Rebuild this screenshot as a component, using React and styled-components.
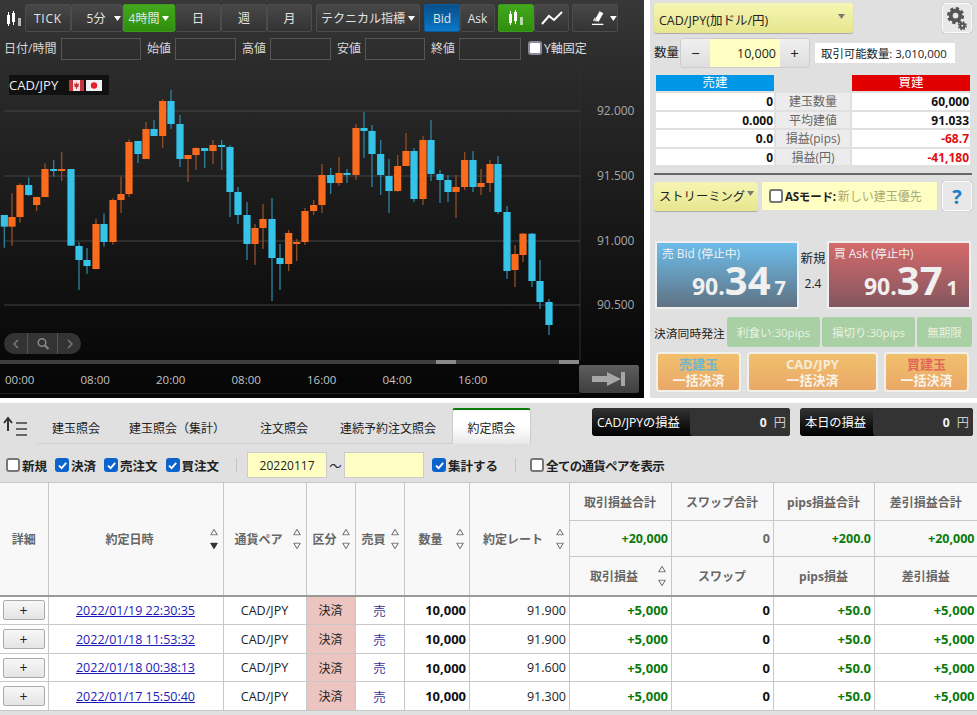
import React from "react"
import styled, { createGlobalStyle } from "styled-components"

const FONT = `"Open Sans", "Noto Sans CJK JP", sans-serif`

const GlobalStyle = createGlobalStyle`
html, body { margin: 0; padding: 0; background: #fff; }
body { font-family: ${FONT}; font-size: 12.5px; color: #222; width: 977px; height: 715px; overflow: hidden; }
* { box-sizing: border-box; }
`

// candles: x, wickTop, wickBottom, bodyTop, bodyBottom, up
const LEFT_CANDLES = [
    [13, 435, 533, 435, 470, 0], [36, 370, 527, 441, 470, 1], [60, 340, 458, 345, 441, 1], [86, 322, 378, 345, 375, 0],
    [110, 381, 423, 381, 405, 1], [135, 280, 381, 297, 381, 1], [161, 270, 320, 297, 303, 0], [185, 246, 333, 297, 303, 1],
    [213, 297, 527, 297, 527, 0], [237, 517, 660, 528, 570, 0], [261, 534, 612, 570, 588, 0], [288, 447, 598, 462, 597, 1],
    [312, 430, 530, 462, 516, 0], [339, 385, 524, 390, 516, 1], [363, 320, 429, 372, 390, 1], [387, 208, 380, 216, 372, 1],
    [414, 213, 279, 213, 252, 0], [438, 156, 267, 177, 267, 1], [462, 150, 198, 177, 198, 0], [488, 87, 234, 93, 198, 1],
    [513, 60, 177, 93, 162, 0], [540, 135, 291, 162, 267, 0], [564, 255, 336, 255, 267, 1], [588, 232, 300, 234, 255, 1],
    [614, 234, 294, 234, 243, 0], [639, 210, 282, 225, 243, 1], [665, 210, 300, 225, 231, 0], [690, 225, 441, 231, 366, 0],
    [714, 351, 462, 366, 435, 0], [741, 396, 570, 435, 522, 0], [765, 462, 585, 474, 522, 1], [789, 402, 537, 447, 474, 1],
    [816, 384, 693, 447, 564, 0], [840, 522, 660, 564, 582, 0], [866, 480, 603, 489, 582, 1], [890, 507, 573, 516, 522, 1],
]
const RIGHT_CANDLES = [
    [45, 414, 525, 423, 516, 1], [71, 390, 435, 405, 423, 1], [96, 282, 429, 315, 405, 1], [122, 294, 372, 315, 339, 0],
    [147, 261, 348, 309, 339, 1], [171, 297, 339, 309, 315, 0], [198, 162, 330, 174, 315, 1], [222, 126, 264, 174, 183, 0],
    [246, 165, 351, 183, 252, 0], [272, 210, 375, 252, 315, 0], [297, 267, 429, 318, 363, 0], [323, 255, 365, 288, 363, 1],
    [348, 189, 288, 243, 288, 1], [372, 234, 396, 243, 387, 0], [399, 198, 405, 210, 387, 1], [423, 150, 333, 210, 312, 0],
    [450, 300, 399, 312, 330, 0], [474, 315, 396, 330, 366, 0], [498, 315, 444, 351, 366, 1], [524, 246, 360, 270, 351, 1],
    [549, 243, 366, 270, 351, 0], [573, 297, 375, 339, 351, 1], [600, 270, 366, 282, 339, 1], [624, 258, 432, 282, 426, 0],
    [651, 408, 627, 426, 603, 0], [675, 525, 651, 552, 600, 1], [699, 489, 576, 491, 555, 1], [726, 489, 651, 491, 633, 0],
    [750, 570, 717, 633, 696, 0], [777, 687, 795, 696, 765, 0],
]
const candles = [
    ...LEFT_CANDLES.map((c) => [c[0] / 3, ...c.slice(1, 5).map((v) => v / 3 + 70), c[5]]),
    ...RIGHT_CANDLES.map((c) => [c[0] / 3 + 290, ...c.slice(1, 5).map((v) => v / 3 + 70), c[5]]),
]

const PRICE_LINES = [[111, "92.000"], [176, "91.500"], [241, "91.000"], [305, "90.500"]]
const TIMES = ["00:00", "08:00", "20:00", "08:00", "16:00", "04:00", "16:00"]
const CHART_TOP = 64

const POSITIONS = [
    ["0", "建玉数量", "60,000", false],
    ["0.000", "平均建値", "91.033", false],
    ["0.0", "損益(pips)", "-68.7", true],
    ["0", "損益(円)", "-41,180", true],
]

const TRADES = [
    ["2022/01/19 22:30:35", "91.900"],
    ["2022/01/18 11:53:32", "91.900"],
    ["2022/01/18 00:38:13", "91.600"],
    ["2022/01/17 15:50:40", "91.300"],
]
const ROW_HEIGHTS = [29, 29, 28, 29]
const COLS = [48, 175, 83, 49, 49, 65, 100, 102, 102, 101, 103]

function CandleIcon({ color = "#fff" }) {
    return (
        <svg width="16" height="16" viewBox="0 0 16 16">
            <g fill={color}>
                <rect x="1" y="4" width="3" height="9" />
                <rect x="2" y="1" width="1" height="14" />
                <rect x="6" y="2" width="3" height="9" />
                <rect x="7" y="0" width="1" height="14" />
                <rect x="12" y="7" width="3" height="8" opacity="0.65" />
            </g>
        </svg>
    )
}

function LineIcon() {
    return (
        <svg width="22" height="16" viewBox="0 0 22 16">
            <path d="M1 14 L8 6 L13 10 L21 2" fill="none" stroke="#fff" strokeWidth="2" />
        </svg>
    )
}

function PenIcon() {
    return (
        <svg width="14" height="16" viewBox="0 0 14 16">
            <path d="M4 10 L9 1 L13 3 L8 12 Z" fill="#fff" />
            <path d="M2 11 L4 7 L7 12 Z" fill="#ccc" />
            <rect x="1" y="14" width="12" height="1.4" fill="#fff" />
        </svg>
    )
}

function Caret({ color = "#fff" }) {
    return (
        <svg width="7" height="5" viewBox="0 0 7 5">
            <path d="M0 0 H7 L3.5 5 Z" fill={color} />
        </svg>
    )
}

function GearIcon() {
    return (
        <svg width="29" height="29" viewBox="0 0 29 29">
            <circle cx="13" cy="11.5" r="5" fill="none" stroke="#555" strokeWidth="4" />
            <circle cx="13" cy="11.5" r="7.6" fill="none" stroke="#555" strokeWidth="2.6" strokeDasharray="3.4 2.57" />
            <circle cx="20" cy="22" r="2.2" fill="none" stroke="#555" strokeWidth="2.2" />
            <circle cx="20" cy="22" r="3.9" fill="none" stroke="#555" strokeWidth="1.6" strokeDasharray="1.8 1.27" />
        </svg>
    )
}

function CanadaFlag() {
    return (
        <svg width="15" height="11" viewBox="0 0 15 11">
            <rect width="15" height="11" fill="#f4e6e6" />
            <rect width="4" height="11" fill="#c8343c" />
            <rect x="11" width="4" height="11" fill="#c8343c" />
            <path d="M7.5 2 L8.4 4 L10 3.6 L9.4 6 L10 6.4 L8 7.6 V9 H7 V7.6 L5 6.4 L5.6 6 L5 3.6 L6.6 4 Z" fill="#c8343c" />
        </svg>
    )
}

function JapanFlag() {
    return (
        <svg width="16" height="11" viewBox="0 0 16 11">
            <rect width="16" height="11" fill="#f2f2f2" />
            <circle cx="8" cy="5.5" r="3.2" fill="#e0202c" />
        </svg>
    )
}

function Sort({ active }) {
    return (
        <SortBox>
            <svg width="8" height="7" viewBox="0 0 8 7">
                <path d="M4 .8 L7.3 6.4 H.7 Z" fill="none" stroke="#666" />
            </svg>
            <svg width="8" height="7" viewBox="0 0 8 7">
                <path d="M4 6.2 L7.3 .6 H.7 Z" fill={active ? "#333" : "none"} stroke={active ? "#333" : "#666"} />
            </svg>
        </SortBox>
    )
}

function Check({ on, label, tight }) {
    return (
        <CheckLabel $tight={tight}>
            <CheckBox $on={on}>
                {on && (
                    <svg width="11" height="11" viewBox="0 0 11 11">
                        <path d="M2 5.6 L4.6 8.2 L9.2 2.8" fill="none" stroke="#fff" strokeWidth="1.8" />
                    </svg>
                )}
            </CheckBox>
            {label}
        </CheckLabel>
    )
}

function Chart() {
    return (
        <Plot>
            <svg width="644" height="296" viewBox={`0 ${CHART_TOP} 644 296`}>
                <line x1="580" x2="580" y1={CHART_TOP} y2="360" stroke="#2f2f2f" />
                {PRICE_LINES.map(([y, label]) => (
                    <g key={label}>
                        <line x1="4" x2="580" y1={y} y2={y} stroke="#444" strokeWidth="1" />
                        <PriceText x="597" y={y + 4}>{label}</PriceText>
                    </g>
                ))}
                {candles.map(([x, wt, wb, bt, bb, up], i) => (
                    <g key={i}>
                        <rect x={x - 0.7} y={wt} width="1.4" height={wb - wt} fill={up ? "#8c4a24" : "#2c7d98"} />
                        <rect x={x - 3.6} y={bt} width="7.2" height={Math.max(bb - bt, 2)} fill={up ? "#fb6b1d" : "#35c3ea"} />
                    </g>
                ))}
            </svg>
            <Legend>
                CAD/JPY
                <Flags><CanadaFlag /><JapanFlag /></Flags>
            </Legend>
            <NavPill>
                <NavPart><svg width="8" height="12" viewBox="0 0 8 12"><path d="M6 2 L2 6 L6 10" fill="none" stroke="#777" strokeWidth="1.6" /></svg></NavPart>
                <NavPart $mid><svg width="14" height="14" viewBox="0 0 14 14"><circle cx="6" cy="5.5" r="3.8" fill="none" stroke="#888" strokeWidth="1.5" /><path d="M9 8.5 L12.5 12" stroke="#888" strokeWidth="2" /></svg></NavPart>
                <NavPart><svg width="8" height="12" viewBox="0 0 8 12"><path d="M2 2 L6 6 L2 10" fill="none" stroke="#777" strokeWidth="1.6" /></svg></NavPart>
            </NavPill>
        </Plot>
    )
}

export default function App() {
    return (
        <Page>
            <GlobalStyle />
            <TopArea>
                <ChartPanel>
                    <Toolbar>
                        <ToolIcon><CandleIcon /></ToolIcon>
                        <ToolGroup>
                            <TickButton $w={46}>TICK</TickButton>
                            <ToolButton $w={52} $inner={9} $pl={14}>5分<Caret /></ToolButton>
                            <ToolButton $w={52} $tone="green">4時間<Caret /></ToolButton>
                            <ToolButton $w={46}>日</ToolButton>
                            <ToolButton $w={46}>週</ToolButton>
                            <ToolButton $w={45}>月</ToolButton>
                        </ToolGroup>
                        <ToolGroup $gap={4}>
                            <ToolButton $w={104}>テクニカル指標 <Caret /></ToolButton>
                        </ToolGroup>
                        <ToolGroup $gap={4}>
                            <ToolButton $w={36} $tone="blue">Bid</ToolButton>
                            <ToolButton $w={35}>Ask</ToolButton>
                        </ToolGroup>
                        <ToolGroup $gap={3}>
                            <ToolButton $w={36} $tone="green"><CandleIcon /></ToolButton>
                            <ToolButton $w={35}><LineIcon /></ToolButton>
                        </ToolGroup>
                        <ToolGroup $gap={3}>
                            <ToolButton $w={46} $inner={6} $pl={18}><PenIcon /><Caret /></ToolButton>
                        </ToolGroup>
                    </Toolbar>
                    <FieldRow>
                        <FieldLabel $w={53}>日付/時間</FieldLabel><FieldBox $w={80} />
                        <FieldLabel>始値</FieldLabel><FieldBox $w={61} />
                        <FieldLabel>高値</FieldLabel><FieldBox $w={61} />
                        <FieldLabel>安値</FieldLabel><FieldBox $w={60} />
                        <FieldLabel>終値</FieldLabel><FieldBox $w={62} />
                        <YFix><DarkCheck />Y軸固定</YFix>
                    </FieldRow>
                    <Chart />
                    <Scrollbar>
                        <ScrollHandle /><ScrollHandle />
                    </Scrollbar>
                    <TimeRow>
                        <TimeAxis>
                            {TIMES.map((t, i) => <TimeLabel key={i}>{t}</TimeLabel>)}
                        </TimeAxis>
                        <JumpButton>
                            <svg width="36" height="16" viewBox="0 0 36 16">
                                <path d="M1 5 H16 V1 L30 8 L16 15 V11 H1 Z" fill="#a6a6a6" />
                                <rect x="30" y="1" width="4" height="14" fill="#a6a6a6" />
                            </svg>
                        </JumpButton>
                    </TimeRow>
                </ChartPanel>
                <OrderPanel>
                    <PairRow>
                        <PairSelect>CAD/JPY(加ドル/円)<Caret color="#777" /></PairSelect>
                        <SquareButton><GearIcon /></SquareButton>
                    </PairRow>
                    <QtyRow>
                        <QtyLabel>数量</QtyLabel>
                        <Stepper>
                            <StepButton>−</StepButton>
                            <QtyValue>10,000</QtyValue>
                            <StepButton>+</StepButton>
                        </Stepper>
                        <Available>取引可能数量: 3,010,000</Available>
                    </QtyRow>
                    <PositionGrid>
                        <SideHead $c="#0097e6">売建</SideHead>
                        <span />
                        <SideHead $c="#e00000">買建</SideHead>
                        {POSITIONS.map(([sell, label, buy, loss]) => (
                            <React.Fragment key={label}>
                                <PosValue>{sell}</PosValue>
                                <PosLabel>{label}</PosLabel>
                                <PosValue $loss={loss}>{buy}</PosValue>
                            </React.Fragment>
                        ))}
                    </PositionGrid>
                    <Divider />
                    <ModeRow>
                        <ModeSelect>ストリーミング<Caret color="#777" /></ModeSelect>
                        <AsBox>
                            <PlainBox />
                            <AsName>ASモード:</AsName>
                            <AsHint>新しい建玉優先</AsHint>
                        </AsBox>
                        <SquareButton>?</SquareButton>
                    </ModeRow>
                    <QuoteRow>
                        <QuoteBox $side="bid">
                            <QuoteTitle>売 Bid (停止中)</QuoteTitle>
                            <QuotePrice>90.<b>34</b><i>7</i></QuotePrice>
                        </QuoteBox>
                        <Spread>
                            <span>新規</span>
                            <small>2.4</small>
                        </Spread>
                        <QuoteBox $side="ask">
                            <QuoteTitle>買 Ask (停止中)</QuoteTitle>
                            <QuotePrice>90.<b>37</b><i>1</i></QuotePrice>
                        </QuoteBox>
                    </QuoteRow>
                    <SettleRow>
                        <SettleLabel>決済同時発注</SettleLabel>
                        <SettleChip $w={93}>利食い:30pips</SettleChip>
                        <SettleChip $w={93}>損切り:30pips</SettleChip>
                        <SettleChip $w={55}>無期限</SettleChip>
                    </SettleRow>
                    <BulkRow>
                        <BulkButton $w={85} $c="#6fb7cf">売建玉<span>一括決済</span></BulkButton>
                        <BulkButton $w={131} $c="#f6ecd8">CAD/JPY<span>一括決済</span></BulkButton>
                        <BulkButton $w={85} $c="#e2685a">買建玉<span>一括決済</span></BulkButton>
                    </BulkRow>
                </OrderPanel>
            </TopArea>
            <BottomArea>
                <TabRow>
                    <SortIcon>
                        <svg width="27" height="22" viewBox="0 0 27 22">
                            <path d="M7 15 V3 M3 7 L7 2 L11 7" fill="none" stroke="#333" strokeWidth="2" />
                            <rect x="15" y="6" width="11" height="2" fill="#666" />
                            <rect x="15" y="12" width="11" height="2" fill="#666" />
                            <rect x="15" y="18" width="11" height="2" fill="#666" />
                        </svg>
                    </SortIcon>
                    <Tabs>
                        <Tab $w={78}>建玉照会</Tab>
                        <Tab $w={124}>建玉照会（集計）</Tab>
                        <Tab $w={90}>注文照会</Tab>
                        <Tab $w={118}>連続予約注文照会</Tab>
                        <ActiveTab>約定照会</ActiveTab>
                    </Tabs>
                    <Totals>
                        <TotalBox $label={98} $w={198}>
                            <span>CAD/JPYの損益</span>
                            <TotalValue><b>0</b> 円</TotalValue>
                        </TotalBox>
                        <TotalBox $label={73} $w={173}>
                            <span>本日の損益</span>
                            <TotalValue><b>0</b> 円</TotalValue>
                        </TotalBox>
                    </Totals>
                </TabRow>
                <FilterRow>
                    <Check label="新規" />
                    <Check on label="決済" />
                    <Check on label="売注文" />
                    <Check on label="買注文" />
                    <FilterSep $r={2} />
                    <DateBox>20220117</DateBox>
                    <Tilde>〜</Tilde>
                    <DateBox />
                    <Check on label="集計する" />
                    <FilterSep $r={6} />
                    <Check tight label="全ての通貨ペアを表示" />
                </FilterRow>
                <Table>
                    <colgroup>
                        {COLS.map((w, i) => <col key={i} width={w} />)}
                    </colgroup>
                    <thead>
                        <HeadRow $h={38}>
                            <Th rowSpan={3}>詳細</Th>
                            <Th rowSpan={3}><HeadCell>約定日時<Sort active /></HeadCell></Th>
                            <Th rowSpan={3}><HeadCell>通貨ペア<Sort /></HeadCell></Th>
                            <Th rowSpan={3}><HeadCell>区分<Sort /></HeadCell></Th>
                            <Th rowSpan={3}><HeadCell>売買<Sort /></HeadCell></Th>
                            <Th rowSpan={3}><HeadCell>数量<Sort /></HeadCell></Th>
                            <Th rowSpan={3}><HeadCell>約定レート<Sort /></HeadCell></Th>
                            <Th>取引損益合計</Th>
                            <Th>スワップ合計</Th>
                            <Th>pips損益合計</Th>
                            <Th>差引損益合計</Th>
                        </HeadRow>
                        <HeadRow $h={36}>
                            <SumCell $c="#0a7a0a">+20,000</SumCell>
                            <SumCell $c="#666">0</SumCell>
                            <SumCell $c="#0a7a0a">+200.0</SumCell>
                            <SumCell $c="#0a7a0a">+20,000</SumCell>
                        </HeadRow>
                        <HeadRow $h={39}>
                            <Th><HeadCell>取引損益<Sort /></HeadCell></Th>
                            <Th>スワップ</Th>
                            <Th>pips損益</Th>
                            <Th>差引損益</Th>
                        </HeadRow>
                    </thead>
                    <tbody>
                        {TRADES.map(([time, rate], i) => (
                            <BodyRow key={time} $h={ROW_HEIGHTS[i]}>
                                <Td $a="center"><PlusButton>+</PlusButton></Td>
                                <Td $a="center"><TimeLink>{time}</TimeLink></Td>
                                <Td $a="center">CAD/JPY</Td>
                                <KindCell>決済</KindCell>
                                <Td $a="center" $c="#3a3396">売</Td>
                                <Td $bold>10,000</Td>
                                <Td>{rate}</Td>
                                <Td $bold $c="#0a7a0a">+5,000</Td>
                                <Td $bold>0</Td>
                                <Td $bold $c="#0a7a0a">+50.0</Td>
                                <Td $bold $c="#0a7a0a">+5,000</Td>
                            </BodyRow>
                        ))}
                    </tbody>
                </Table>
            </BottomArea>
        </Page>
    )
}

const Page = styled.div`
width: 977px;
height: 715px;
display: flex;
flex-direction: column;
gap: 5px;
`
const TopArea = styled.div`
display: flex;
gap: 6px;
height: 398px;
`
const ChartPanel = styled.section`
width: 644px;
height: 398px;
display: flex;
flex-direction: column;
background: linear-gradient(#383838 0, #2c2c2c 60px, #0a0a0a 340px, #050505 100%);
color: #ddd;
`
const Toolbar = styled.div`
display: flex;
align-items: flex-start;
height: 38px;
padding-top: 4px;
`
const ToolIcon = styled.div`
width: 25px;
height: 28px;
padding: 7px 0 0 6px;
`
const ToolGroup = styled.div`
display: flex;
margin-left: ${(p) => p.$gap || 0}px;
`
const toneBg = {
    green: "linear-gradient(#43a81c, #2f8e0d)",
    blue: "linear-gradient(#08508c, #0a78c8)",
}
const ToolButton = styled.div`
width: ${(p) => p.$w}px;
height: 28px;
display: flex;
align-items: center;
justify-content: center;
gap: ${(p) => p.$inner || 3}px;
padding-left: ${(p) => p.$pl || 0}px;
font-size: 12px;
color: #e4e4e4;
background: ${(p) => toneBg[p.$tone] || "linear-gradient(#484848, #333)"};
border: 1px solid ${(p) => (p.$tone === "green" ? "#3c9a1c" : p.$tone === "blue" ? "#0a5c9c" : "#4c4c4c")};
border-radius: 2px;
`
const TickButton = styled(ToolButton)`
letter-spacing: 0.8px;
`
const FieldRow = styled.div`
display: flex;
align-items: center;
height: 22px;
padding-left: 4px;
font-size: 12px;
color: #d8d8d8;
`
const FieldLabel = styled.span`
width: ${(p) => p.$w || 24}px;
margin-right: 4px;
padding-bottom: 2px;
white-space: nowrap;
`
const FieldBox = styled.div`
width: ${(p) => p.$w}px;
height: 22px;
border: 1px solid #555;
margin-right: 6px;
`
const YFix = styled.div`
display: flex;
align-items: center;
gap: 2px;
margin-left: 1px;
padding-bottom: 2px;
color: #e0e0e0;
`
const DarkCheck = styled.span`
width: 14px;
height: 14px;
background: #fff;
border: 2px solid #8a8a9a;
border-radius: 3px;
`
const Plot = styled.div`
position: relative;
height: 296px;
margin-top: 4px;
svg { display: block; }
`
const PriceText = styled.text`
font-size: 12px;
fill: #a8a8a8;
font-family: ${FONT};
`
const Legend = styled.div`
position: absolute;
left: 9px;
top: 11px;
width: 100px;
height: 20px;
display: flex;
align-items: center;
justify-content: space-between;
padding-right: 7px;
background: #111;
font-size: 13px;
color: #eee;
`
const Flags = styled.span`
display: flex;
gap: 2px;
`
const NavPill = styled.div`
position: absolute;
left: 4px;
top: 269px;
width: 77px;
height: 21px;
display: flex;
background: #333;
border-radius: 11px;
`
const NavPart = styled.div`
flex: ${(p) => (p.$mid ? "0 0 31px" : "1")};
display: flex;
align-items: center;
justify-content: center;
${(p) => p.$mid && "border-left: 1px solid #555; border-right: 1px solid #555;"}
`
const Scrollbar = styled.div`
width: 579px;
height: 4px;
background: #3e3e3e;
display: flex;
justify-content: space-between;
padding: 0 0 0 436px;
`
const ScrollHandle = styled.span`
width: 20px;
height: 4px;
background: #8a8a8a;
`
const TimeRow = styled.div`
flex: 1;
display: flex;
align-items: flex-start;
`
const TimeAxis = styled.div`
width: 579px;
height: 30px;
border-bottom: 1px solid #222;
display: flex;
gap: 45.5px;
align-items: center;
padding: 1px 0 0 5px;
`
const TimeLabel = styled.span`
font-size: 11.5px;
width: 30px;
color: #c4c4c4;
`
const JumpButton = styled.div`
width: 60px;
height: 28px;
margin-top: 1px;
display: flex;
align-items: center;
justify-content: center;
background: linear-gradient(#5e5e5e, #3e3e3e);
border-radius: 2px;
`
const OrderPanel = styled.section`
flex: 1;
background: #e0e0e0;
padding: 3px 5px 0 4px;
display: flex;
flex-direction: column;
`
const PairRow = styled.div`
display: flex;
justify-content: space-between;
align-items: center;
height: 30px;
`
const yellowButton = `
background: linear-gradient(#f6f6b4, #e6e68e);
border-radius: 3px;
box-shadow: 0 1px 1px #aaa;
display: flex;
align-items: center;
justify-content: space-between;
`
const PairSelect = styled.div`
${yellowButton}
width: 199px;
height: 30px;
padding: 3px 8px 0 5px;
font-size: 12.5px;
svg { margin-top: -7px; }
`
const SquareButton = styled.div`
width: 30px;
height: 30px;
display: flex;
align-items: center;
justify-content: center;
background: #e8e8e8;
border: 1px solid #fafafa;
border-radius: 3px;
box-shadow: 0 0 1px #888;
font-size: 20px;
font-weight: 700;
color: #1a7fc8;
`
const QtyRow = styled.div`
display: flex;
align-items: center;
height: 30px;
margin-top: 5px;
`
const QtyLabel = styled.span`
width: 26px;
margin-top: -4px;
font-size: 12.5px;
`
const Stepper = styled.div`
display: flex;
width: 130px;
height: 30px;
border: 1px solid #ccc;
border-radius: 3px;
overflow: hidden;
`
const StepButton = styled.div`
width: 29px;
display: flex;
align-items: center;
justify-content: center;
font-size: 15px;
background: linear-gradient(#f0f0f0, #dedede);
`
const QtyValue = styled.div`
flex: 1;
display: flex;
align-items: center;
justify-content: flex-end;
padding-right: 4px;
background: #ffffc4;
font-size: 12.5px;
`
const Available = styled.div`
width: 140px;
height: 20px;
margin-left: 5px;
padding-left: 6px;
display: flex;
align-items: center;
white-space: nowrap;
background: #fff;
font-size: 11.4px;
`
const PositionGrid = styled.div`
display: grid;
grid-template-columns: 118px 74px 118px;
grid-template-rows: 16px 17px 16px 17px 16px;
gap: 2px;
margin: 7px 0 0 2px;
`
const SideHead = styled.div`
background: ${(p) => p.$c};
color: #fff;
text-align: center;
font-size: 12.5px;
line-height: 16px;
`
const PosValue = styled.div`
background: #fff;
text-align: right;
padding-right: 1px;
font-size: 12px;
font-weight: 700;
line-height: 17px;
color: ${(p) => (p.$loss ? "#e01010" : "#111")};
`
const PosLabel = styled.div`
background: #ececec;
text-align: center;
font-size: 12px;
line-height: 17px;
color: #666;
`
const Divider = styled.div`
height: 2px;
background: #666;
margin-top: 8px;
`
const ModeRow = styled.div`
display: flex;
align-items: center;
margin-top: 6px;
height: 30px;
`
const ModeSelect = styled.div`
${yellowButton}
width: 104px;
height: 29px;
padding: 0 4px 0 5px;
font-size: 12.3px;
white-space: nowrap;
svg { margin-top: -6px; }
`
const AsBox = styled.div`
width: 177px;
height: 30px;
margin: 0 4px 0 3px;
display: flex;
align-items: center;
padding-left: 7px;
background: #ffffc4;
border: 1px solid #ddd;
`
const PlainBox = styled.span`
width: 14px;
height: 14px;
background: #fff;
border: 2px solid #777;
border-radius: 3px;
margin-right: 2px;
`
const AsName = styled.span`
font-size: 11.5px;
font-weight: 700;
letter-spacing: -0.2px;
white-space: nowrap;
`
const AsHint = styled.span`
font-size: 12px;
color: #a8a878;
white-space: nowrap;
margin-left: 2px;
`
const QuoteRow = styled.div`
display: flex;
margin: 30px 0 0 1px;
height: 68px;
`
const QuoteBox = styled.div`
width: 144px;
height: 68px;
border: 2px solid #f0f0f0;
padding: 2px 5px;
color: #f0f0f0;
background: ${(p) => (p.$side === "bid"
        ? "linear-gradient(#6dbdec, #5f7282)"
        : "linear-gradient(#d46a6a, #835660)")};
`
const QuoteTitle = styled.div`
font-size: 11.8px;
line-height: 16px;
white-space: nowrap;
`
const QuotePrice = styled.div`
display: flex;
align-items: baseline;
justify-content: flex-end;
padding-right: 6px;
margin-top: 4px;
font-family: "Open Sans", sans-serif;
font-weight: 700;
font-size: 23px;
line-height: 30px;
b { font-size: 40px; font-weight: 700; }
i { font-style: normal; font-size: 20px; margin-left: 4px; }
`
const Spread = styled.div`
width: 28px;
display: flex;
flex-direction: column;
align-items: center;
gap: 8px;
padding-top: 7px;
font-size: 12.5px;
small { font-size: 12px; }
`
const SettleRow = styled.div`
display: flex;
gap: 2px;
align-items: center;
margin-top: 8px;
height: 30px;
`
const SettleLabel = styled.span`
width: 71px;
font-size: 11.8px;
white-space: nowrap;
`
const SettleChip = styled.div`
width: ${(p) => p.$w}px;
height: 30px;
display: flex;
align-items: center;
justify-content: center;
background: #a9cfa4;
border-radius: 3px;
font-size: 11.5px;
color: #e8f2e4;
white-space: nowrap;
`
const BulkRow = styled.div`
display: flex;
gap: 6px;
margin: 5px 0 0 2px;
`
const BulkButton = styled.div`
width: ${(p) => p.$w}px;
height: 40px;
display: flex;
flex-direction: column;
align-items: center;
justify-content: center;
background: linear-gradient(#f0c06c, #eaa868);
border: 2px solid #f2f0ea;
border-radius: 4px;
font-size: 13px;
line-height: 16px;
font-weight: 700;
color: ${(p) => p.$c};
span { color: #f8f2e8; }
`
const BottomArea = styled.section`
flex: 1;
min-height: 0;
background: #e0e0e0;
padding-top: 5px;
`
const TabRow = styled.div`
display: flex;
align-items: flex-start;
height: 36px;
`
const SortIcon = styled.div`
width: 37px;
padding: 8px 0 0 1px;
`
const Tabs = styled.div`
display: flex;
height: 36px;
border-bottom: 1px solid #cfcfcf;
`
const Tab = styled.div`
width: ${(p) => p.$w}px;
display: flex;
align-items: center;
justify-content: center;
font-size: 12px;
padding-top: 4px;
white-space: nowrap;
`
const ActiveTab = styled(Tab)`
width: 79px;
height: 36px;
margin-left: 5px;
background: linear-gradient(#fff 50%, #e8e8e8);
border: 1px solid #ccc;
border-top: 2px solid #0a7a0a;
border-bottom: none;
border-radius: 3px 3px 0 0;
padding-top: 2px;
`
const Totals = styled.div`
display: flex;
gap: 10px;
margin-left: 61px;
`
const TotalBox = styled.div`
width: ${(p) => p.$w}px;
height: 28px;
display: flex;
align-items: center;
background: linear-gradient(#333, #000);
border-radius: 3px;
color: #fff;
font-size: 12.2px;
white-space: nowrap;
> span { width: ${(p) => p.$label}px; padding-left: 5px; }
`
const TotalValue = styled.div`
flex: 1;
height: 100%;
display: flex;
align-items: center;
justify-content: flex-end;
gap: 7px;
padding-right: 4px;
background: #333;
border-radius: 3px;
color: #ccc;
b { color: #f4f4f4; }
`
const FilterRow = styled.div`
display: flex;
align-items: center;
height: 26px;
margin-top: 8px;
padding-left: 6px;
font-size: 12.5px;
font-weight: 700;
gap: 8px;
`
const CheckLabel = styled.label`
display: flex;
align-items: center;
gap: 2px;
white-space: nowrap;
${(p) => p.$tight && "letter-spacing: -0.7px;"}
`
const CheckBox = styled.span`
width: 14px;
height: 14px;
display: flex;
align-items: center;
justify-content: center;
background: ${(p) => (p.$on ? "#0b63ce" : "#fff")};
border: ${(p) => (p.$on ? "none" : "2px solid #777")};
border-radius: 3px;
`
const FilterSep = styled.span`
width: 1px;
height: 14px;
margin: 0 ${(p) => p.$r}px 0 9px;
background: #c4c4c4;
`
const DateBox = styled.div`
width: 80px;
height: 26px;
display: flex;
align-items: center;
justify-content: center;
background: #ffffc4;
border: 1px solid #ccc;
font-weight: 400;
font-size: 12px;
`
const Tilde = styled.span`
font-weight: 400;
margin: 0 -8px;
width: 17px;
text-align: center;
`
const Table = styled.table`
width: 977px;
margin-top: 4px;
table-layout: fixed;
border-collapse: collapse;
font-size: 12.5px;
`
const HeadRow = styled.tr`
height: ${(p) => p.$h}px;
`
const Th = styled.th`
padding: 0 6px;
background: #f8f8f8;
border: 1px solid #c8c8c8;
border-bottom: ${(p) => (p.rowSpan ? "2px solid #999" : "1px solid #c8c8c8")};
color: #666;
font-size: 12px;
font-weight: 700;
white-space: nowrap;
tr:last-child > & { border-bottom: 2px solid #999; }
&:first-child { border-left: none; }
&:last-child { border-right: none; }
`
const HeadCell = styled.div`
display: flex;
align-items: center;
justify-content: center;
position: relative;
padding-right: 12px;
`
const SortBox = styled.span`
position: absolute;
right: -1px;
top: 50%;
transform: translateY(-50%);
display: flex;
flex-direction: column;
gap: 7px;
svg { display: block; }
`
const SumCell = styled.td`
background: #f8f8f8;
border: 1px solid #c8c8c8;
text-align: right;
padding-right: 2.5px;
font-size: 12.5px;
font-weight: 700;
color: ${(p) => p.$c};
&:last-child { border-right: none; }
`
const BodyRow = styled.tr`
height: ${(p) => p.$h}px;
`
const Td = styled.td`
background: #fff;
border: 1px solid #c8c8c8;
padding: 0 2.5px;
text-align: ${(p) => p.$a || "right"};
font-size: ${(p) => (p.$bold ? "13px" : "12.5px")};
font-weight: ${(p) => (p.$bold ? 700 : 400)};
color: ${(p) => p.$c || (p.$bold ? "#111" : "#222")};
&:first-child { border-left: none; }
&:last-child { border-right: none; }
`
const KindCell = styled(Td)`
background: #ecc4c0;
text-align: center;
font-size: 12px;
`
const PlusButton = styled.div`
width: 42px;
height: 20px;
display: flex;
align-items: center;
justify-content: center;
background: linear-gradient(#f8f8f8, #e4e4e4);
border: 1px solid #aaa;
border-radius: 2px;
font-size: 14px;
`
const TimeLink = styled.a`
color: #1a1ab8;
text-decoration: underline;
font-size: 12.5px;
`
